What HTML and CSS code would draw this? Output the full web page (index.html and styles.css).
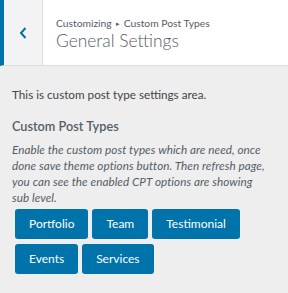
FILE: index.html
```html
<!DOCTYPE html>
<html>
<head>
<meta charset="utf-8">
<link rel="stylesheet" href="styles.css">
</head>
<body>
<div class="header">
  <div class="back">
    <svg width="8" height="12" viewBox="0 0 8 12"><path d="M6.5 1 L2 6 L6.5 11" fill="none" stroke="#0073aa" stroke-width="2"/></svg>
  </div>
  <div class="titles">
    <div class="crumb">Customizing<span class="sep">▸</span>Custom Post Types</div>
    <div class="title">General Settings</div>
  </div>
</div>
<div class="content">
  <p class="intro">This is custom post type settings area.</p>
  <h3 class="label">Custom Post Types</h3>
  <p class="desc">Enable the custom post types which are need, once done save theme options button. Then refresh page, you can see the enabled CPT options are showing sub level.</p>
  <div class="buttons">
    <span class="btn">Portfolio</span>
    <span class="btn">Team</span>
    <span class="btn">Testimonial</span>
    <span class="btn">Events</span>
    <span class="btn">Services</span>
  </div>
</div>
</body>
</html>
```
FILE: styles.css
```css
html, body { margin: 0; padding: 0; }
body {
  background: #eeeeee;
  font-family: Lato, "Open Sans", sans-serif;
  color: #444;
  width: 288px;
  height: 293px;
  overflow: hidden;
}
.header {
  display: flex;
  height: 65px;
  background: #fff;
  border-bottom: 1px solid #ddd;
  border-left: 4px solid #0073aa;
}
.back {
  width: 38px;
  background: #f3f3f5;
  border-right: 1px solid #ddd;
  display: flex;
  align-items: center;
  justify-content: center;
}
.titles {
  padding: 16px 0 0 13px;
}
.crumb {
  font-size: 10.3px;
  line-height: 14px;
  color: #555d66;
}
.sep {
  font-size: 7px;
  vertical-align: 1px;
  margin: 0 4px;
}
.title {
  font-size: 17.4px;
  font-weight: 300;
  line-height: 21px;
  color: #555d66;
}
.content {
  padding: 20px 12px 0 12px;
}
.intro {
  margin: 0;
  font-size: 11.7px;
  line-height: 16px;
  color: #444;
}
.label {
  margin: 14.5px 0 0 0;
  font-size: 12.7px;
  font-weight: 600;
  line-height: 18px;
  color: #555d66;
}
.desc {
  margin: 6.7px 0 0 0;
  max-width: 254px;
  font-size: 11.7px;
  font-style: italic;
  line-height: 16px;
  letter-spacing: 0.05px;
  color: #555d66;
}
.buttons {
  display: flex;
  flex-wrap: wrap;
  gap: 5px 4px;
  margin: 4px 0 0 3px;
  width: 240px;
}
.btn {
  display: inline-block;
  background: #0073aa;
  color: #fff;
  font-size: 12px;
  line-height: 30px;
  height: 30px;
  padding: 0 14px;
  border-radius: 3px;
}
```
